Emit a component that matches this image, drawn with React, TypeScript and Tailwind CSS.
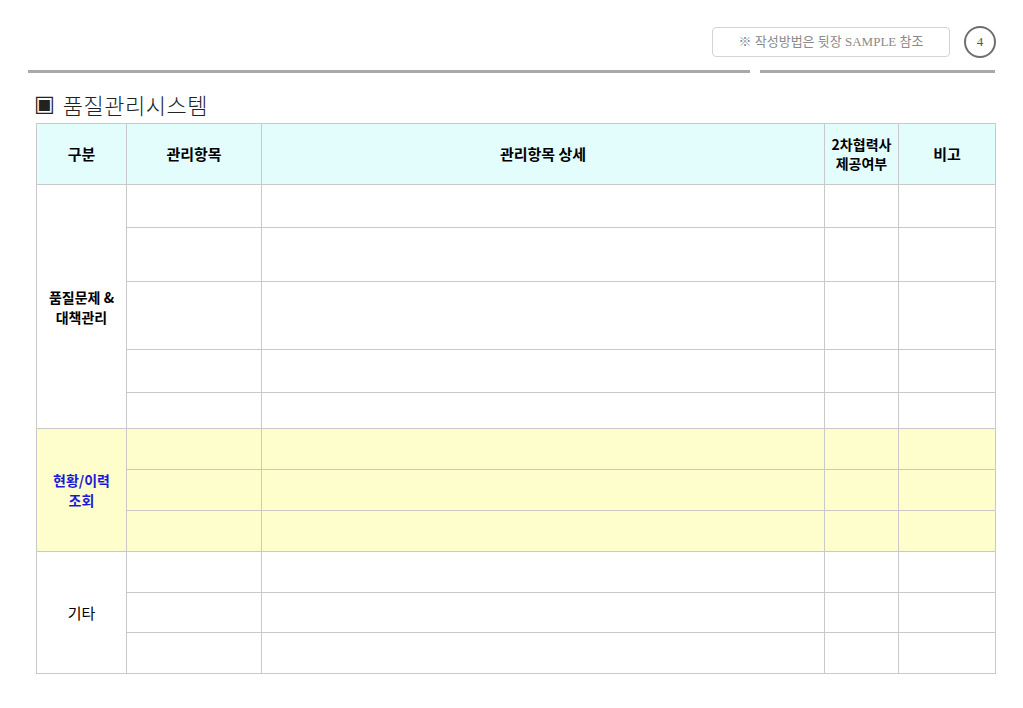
const font = { fontFamily: '"Noto Sans CJK KR", "Noto Sans", sans-serif' };

type Row = { h: number };

const sections: {
  label: string[];
  bold: boolean;
  color: string;
  bg: string;
  rows: Row[];
}[] = [
  {
    label: ["품질문제 &", "대책관리"],
    bold: true,
    color: "text-black",
    bg: "bg-white",
    rows: [{ h: 43 }, { h: 54 }, { h: 68 }, { h: 43 }, { h: 36 }],
  },
  {
    label: ["현황/이력", "조회"],
    bold: true,
    color: "text-[#1a1ad6]",
    bg: "bg-[#fefdcc]",
    rows: [{ h: 41 }, { h: 41 }, { h: 41 }],
  },
  {
    label: ["기타"],
    bold: false,
    color: "text-black",
    bg: "bg-white",
    rows: [{ h: 41 }, { h: 40 }, { h: 41 }],
  },
];

const cell = "border border-[#c9c9c9]";

export default function App() {
  return (
    <div className="w-[1023px] h-[708px] bg-white relative" style={font}>
      <div className="flex items-center justify-end pt-[26px] pr-[27px] gap-[14px]">
        <div className="w-[238px] h-[30px] border border-[#d4d4d4] rounded-[4px] flex items-center justify-center text-[13px] text-[#8a8a8a] font-['Liberation_Serif','Noto_Sans_CJK_KR',serif]">
          ※ 작성방법은 뒷장 SAMPLE 참조
        </div>
        <div className="w-[32px] h-[32px] rounded-full border-2 border-[#6f6f6f] flex items-center justify-center text-[13px] text-[#555] font-['Liberation_Serif',serif]">
          4
        </div>
      </div>
      <div className="flex mt-[12px] pl-[28px] gap-[10px]">
        <div className="w-[722px] h-[3px] bg-[#a9a9a9]" />
        <div className="w-[235px] h-[3px] bg-[#a9a9a9]" />
      </div>
      <div className="pl-[34px] mt-[17px] flex items-center gap-[8px] text-[22px] leading-[28px] text-[#222]">
        <span className="text-[22px] leading-[22px] font-['DejaVu_Sans',sans-serif]">▣</span>
        <span className="font-light tracking-[0.5px]">품질관리시스템</span>
      </div>
      <table className="ml-[36px] mt-[5px] border-collapse table-fixed w-[959px] text-[15px]">
        <colgroup>
          <col className="w-[90px]" />
          <col className="w-[135px]" />
          <col className="w-[563px]" />
          <col className="w-[74px]" />
          <col className="w-[97px]" />
        </colgroup>
        <thead>
          <tr className="h-[61px] bg-[#e3fdfd] font-bold text-black">
            <th className={cell}>구분</th>
            <th className={cell}>관리항목</th>
            <th className={cell}>관리항목 상세</th>
            <th className={`${cell} leading-[19px] text-[14px]`}>
              2차협력사
              <br />
              제공여부
            </th>
            <th className={cell}>비고</th>
          </tr>
        </thead>
        <tbody>
          {sections.map((s, si) =>
            s.rows.map((r, ri) => (
              <tr key={`${si}-${ri}`} className={s.bg} style={{ height: r.h }}>
                {ri === 0 && (
                  <td
                    rowSpan={s.rows.length}
                    className={`${cell} text-center leading-[20px] ${s.color} ${s.bold ? "font-bold text-[14px]" : "text-[15px]"}`}
                  >
                    {s.label.map((l, i) => (
                      <div key={i}>{l}</div>
                    ))}
                  </td>
                )}
                <td className={cell} />
                <td className={cell} />
                <td className={cell} />
                <td className={cell} />
              </tr>
            ))
          )}
        </tbody>
      </table>
    </div>
  );
}
